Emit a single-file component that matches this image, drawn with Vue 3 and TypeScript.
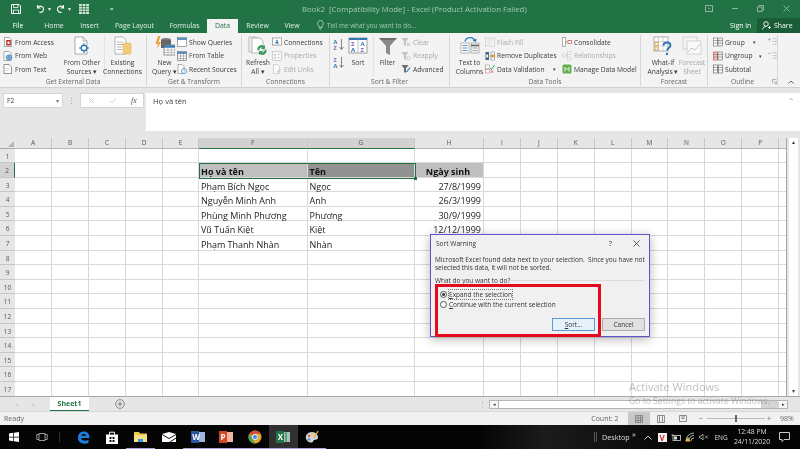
<script setup lang="ts">
interface ListRow {
  icon: string;
  label?: string;
  off?: boolean;
  caret?: number;
}

interface Col {
  kind: 'big' | 'list' | 'pair';
  w: number;
  icon?: string;
  lines?: string[];
  off?: boolean;
  sep?: boolean;
  rows?: ListRow[];
}

interface Group {
  title: string;
  w: number;
  pad: number;
  cols: Col[];
}

const icons: Record<string, string> = {
  access: '<path d="M1.500.5h5l2 2v7h-7z" fill="#fff" stroke="#777" stroke-width=".6"/><rect x="3.2" y="3" width="4.600" height="5.500" fill="#b7302c"/><rect x="4.500" y="4.500" width="2" height="2.500" fill="#fff"/>',
  web: '<path d="M1 .5h5l2 2v7H1z" fill="#fff" stroke="#777" stroke-width=".6"/><circle cx="6" cy="6.500" r="2.800" fill="#8cb9dd" stroke="#2e75b6" stroke-width=".6"/><path d="M3.500 6.500h5M6 4v5" stroke="#2e75b6" stroke-width=".4"/>',
  text: '<path d="M1 .5h5l2.500 2.500v6.500H1z" fill="#fff" stroke="#666" stroke-width=".7"/><path d="M2.500 4.500h4M2.500 6.500h4" stroke="#aaa" stroke-width=".5"/>',
  other: '<path d="M3 1h8l4 4v13H3z" fill="#fff" stroke="#8a8a8a" stroke-width=".7"/><path d="M11 1v4h4" fill="none" stroke="#8a8a8a" stroke-width=".7"/><circle cx="12" cy="12" r="2.800" fill="none" stroke="#2e75b6" stroke-width="1.400"/><path d="M12 7v2.500M12 14.500V17M7 12h2.500M14.500 12H17" stroke="#2e75b6" stroke-width="1"/>',
  existing: '<path d="M2 1h8l3 3v14H2z" fill="#fff" stroke="#999" stroke-width=".7"/><path d="M4 6h6M4 8.500h6M4 11h5M4 13.500h5" stroke="#999" stroke-width=".7"/><rect x="10" y="7" width="8" height="11" rx="1" fill="#f1cc7c" stroke="#d8a93f" stroke-width=".5"/>',
  query: '<path d="M3 0L.5 8H3l-1 5 4-7H3.500l2-6z" fill="#e9a23b"/><ellipse cx="11" cy="4" rx="5" ry="2" fill="#777"/><rect x="6" y="4" width="10" height="8" fill="#666"/><rect x="9" y="9" width="11" height="10" fill="#fff" stroke="#6c6c6c" stroke-width=".7"/><path d="M9 10.500h11" stroke="#2e75b6" stroke-width="2.400"/><path d="M9 14h11M9 16.500h11M13 12v7M16.500 12v7" stroke="#8a8a8a" stroke-width=".5"/>',
  show: '<rect x=".5" y=".5" width="9" height="9" fill="#fff" stroke="#6a6a6a" stroke-width=".6"/><path d="M.5 2h9" stroke="#2e75b6" stroke-width="1.600"/>',
  table: '<rect x=".5" y=".5" width="9" height="9" fill="#fff" stroke="#5c5c5c" stroke-width=".6"/><path d="M.5 2h9" stroke="#2e75b6" stroke-width="1.600"/><path d="M.5 5h9M.5 7.500h9M3.500 3v6.500M6.500 3v6.500" stroke="#777" stroke-width=".5"/>',
  recent: '<path d="M1 .5h4l2 2v7H1z" fill="#fff" stroke="#777" stroke-width=".6"/><circle cx="7" cy="7" r="2.500" fill="#fff" stroke="#2e75b6" stroke-width=".7"/><path d="M7 5.500V7h1.200" fill="none" stroke="#2e75b6" stroke-width=".5"/>',
  refresh: '<path d="M1 1h7l3 3v12H1z" fill="#f2f2f2" stroke="#999" stroke-width=".6"/><path d="M4 2h8l3 3v12H4z" fill="#fff" stroke="#888" stroke-width=".6"/><path d="M10 15a4 4 0 0 1 6-5l1-1v4h-4l1.500-1.500a2.300 2.300 0 0 0-3 2z" fill="#3a9a5b"/><path d="M18 13a4 4 0 0 1-6 5l-1 1v-4h4l-1.500 1.500a2.300 2.300 0 0 0 3-2z" fill="#3a9a5b"/>',
  conn: '<rect x=".5" y="1" width="9" height="7" fill="#fff" stroke="#777" stroke-width=".6"/><path d="M5 2.500l1.500 2h-3z" fill="#2e75b6"/><path d="M3.500 5h3v1.500h-3z" fill="#2e75b6"/>',
  props: '<rect x=".5" y=".5" width="9" height="9" fill="#f7f7f7" stroke="#bbb" stroke-width=".6"/><path d="M2 3h2v1.500H2zM2 6h2v1.500H2z" fill="#c8c8c8"/><path d="M5 3.500h3M5 6.500h3" stroke="#c0c0c0" stroke-width=".6"/>',
  links: '<path d="M1.500.5h4l2 2v7h-6z" fill="#f9f9f9" stroke="#bbb" stroke-width=".6"/><path d="M5 8l3-3 1 1-3 3z" fill="#c5c5c5"/>',
  az: '<text x=".5" y="5.500" font-size="5.500" font-weight="700" fill="#2e75b6">A</text><text x=".5" y="11.500" font-size="5.500" font-weight="700" fill="#7c6bb0">Z</text><path d="M8.500 1v10M6.500 9l2 2.500 2-2.500" fill="none" stroke="#666" stroke-width=".8"/>',
  za: '<text x=".5" y="5.500" font-size="5.500" font-weight="700" fill="#7c6bb0">Z</text><text x=".5" y="11.500" font-size="5.500" font-weight="700" fill="#2e75b6">A</text><path d="M8.500 1v10M6.500 9l2 2.500 2-2.500" fill="none" stroke="#666" stroke-width=".8"/>',
  sort: '<rect x="1" y="2" width="18" height="15" fill="#fff" stroke="#7a7a7a" stroke-width=".7"/><path d="M1 3h18" stroke="#2e75b6" stroke-width="2"/><path d="M10 2v15" stroke="#999" stroke-width=".6"/><text x="3" y="10" font-size="6" font-weight="700" fill="#7c6bb0">Z</text><text x="3" y="16" font-size="6" font-weight="700" fill="#2e75b6">A</text><text x="12.500" y="10" font-size="6" font-weight="700" fill="#2e75b6">A</text><text x="12.500" y="16" font-size="6" font-weight="700" fill="#7c6bb0">Z</text>',
  filter: '<path d="M1 2h18l-7 8v9l-4-2v-7z" fill="#8a8a8a"/><path d="M1 2h18l-2 2H3z" fill="#6e6e6e"/>',
  clear: '<path d="M.5 1h7L5 4.500V9L3 8V4.500z" fill="#c4c4c4"/><path d="M6 6l3 3M9 6l-3 3" stroke="#d49a94" stroke-width=".8"/>',
  reapply: '<path d="M.5 1h7L5 4.500V9L3 8V4.500z" fill="#c4c4c4"/><circle cx="7.500" cy="7" r="1.800" fill="none" stroke="#a9cdb5" stroke-width=".7"/>',
  advanced: '<path d="M.5 1h7L5 4.500V9L3 8V4.500z" fill="#6f6f6f"/><path d="M5.500 8L9 3.500" stroke="#2e75b6" stroke-width="1.200"/>',
  columns: '<rect x="1" y="7" width="8" height="10" fill="#fff" stroke="#8a8a8a" stroke-width=".6"/><path d="M2.500 9.500h5M2.500 12h5M2.500 14.500h5" stroke="#2e75b6" stroke-width=".8"/><rect x="11" y="7" width="8" height="10" fill="#f1f1f1" stroke="#8a8a8a" stroke-width=".6"/><path d="M11 9.500h8" stroke="#666" stroke-width="1.600"/><path d="M12.500 12h5M12.500 14.500h5" stroke="#777" stroke-width=".6"/><path d="M5 5.500C6 1 13 0 15 5" fill="none" stroke="#2e75b6" stroke-width="1.300"/><path d="M12.500 4l3 2.300L17 3z" fill="#2e75b6"/>',
  flash: '<rect x=".5" y="1" width="9" height="8" fill="#f7f7f7" stroke="#c0c0c0" stroke-width=".6"/><path d="M2 3h6M2 5h6M2 7h4" stroke="#cecece" stroke-width=".6"/>',
  dupes: '<rect x=".5" y="1" width="3.500" height="8" fill="#39648f"/><path d="M4.500 5h1" stroke="#555" stroke-width=".7"/><rect x="6" y="1" width="3.500" height="8" fill="#fff" stroke="#666" stroke-width=".5"/><rect x="6.300" y="3.500" width="3" height="3" fill="#e39a2b"/><rect x="1.200" y="3.500" width="2" height="3" fill="#fff"/>',
  valid: '<rect x=".5" y="1" width="4" height="3.500" fill="#fff" stroke="#888" stroke-width=".5"/><rect x=".5" y="5.500" width="4" height="3.500" fill="#fff" stroke="#c76161" stroke-width=".5"/><path d="M5 4l1.500 1.500L9.500 1" fill="none" stroke="#2f9a57" stroke-width=".9"/><path d="M5.500 6l3 3M8.500 6l-3 3" stroke="#c76161" stroke-width=".7"/>',
  consol: '<rect x=".5" y=".5" width="3" height="9" fill="#fff" stroke="#666" stroke-width=".5"/><path d="M3.500 5h2" stroke="#666" stroke-width=".6"/><rect x="6" y="3.500" width="3.500" height="3" fill="#fff" stroke="#c74a4a" stroke-width=".7"/>',
  rel: '<rect x=".5" y="3" width="3.500" height="3" fill="#f4f4f4" stroke="#c3c3c3" stroke-width=".5"/><rect x="5.500" y=".5" width="3.500" height="3" fill="#f4f4f4" stroke="#c3c3c3" stroke-width=".5"/><rect x="5.500" y="6" width="3.500" height="3" fill="#f4f4f4" stroke="#c3c3c3" stroke-width=".5"/><path d="M4 4.500h1.500V2M5.500 4.500V7" fill="none" stroke="#c3c3c3" stroke-width=".5"/>',
  model: '<rect x=".5" y=".5" width="9" height="9" rx="1.500" fill="#62ad4e"/><path d="M3 7.500V3.500l2 2 2-2v4" fill="none" stroke="#fff" stroke-width=".9"/>',
  whatif: '<rect x="1" y="1" width="14" height="14" fill="#fff" stroke="#8c8c8c" stroke-width=".7"/><path d="M1 5.500h14M1 10h14M5.500 1v14M10 1v14" stroke="#aaa" stroke-width=".5"/><rect x="2" y="6.500" width="3" height="3" fill="none" stroke="#e39a2b" stroke-width=".8"/><rect x="2" y="11" width="3" height="3" fill="none" stroke="#e39a2b" stroke-width=".8"/><path d="M10.500 9.500c0-4 7-4 7 0 0 2.500-3.500 2.500-3.500 5" fill="none" stroke="#2e75b6" stroke-width="1.800"/><circle cx="14" cy="18" r="1.200" fill="#2e75b6"/>',
  forecast: '<rect x="1" y="1" width="14" height="12" fill="#f4f4f4" stroke="#c4c4c4" stroke-width=".7"/><rect x="5" y="5" width="14" height="13" fill="#fafafa" stroke="#c4c4c4" stroke-width=".7"/><path d="M6 16l4-4 3 2 5-6" fill="none" stroke="#b9c9bf" stroke-width="1"/>',
  group: '<rect x=".5" y="1" width="4" height="8" fill="#fff" stroke="#555" stroke-width=".5"/><rect x="5" y="1" width="4.500" height="8" fill="#eee" stroke="#555" stroke-width=".5"/><path d="M.5 3.500h9M.5 6h9" stroke="#555" stroke-width=".5"/>',
  ungroup: '<rect x=".5" y="1" width="4" height="8" fill="#f3c3bd" stroke="#b9423c" stroke-width=".6"/><rect x="5" y="1" width="4.500" height="8" fill="#eee" stroke="#555" stroke-width=".5"/><path d="M.5 3.500h9M.5 6h9" stroke="#555" stroke-width=".5"/>',
  subtotal: '<rect x=".5" y="1" width="4" height="8" fill="#fff" stroke="#555" stroke-width=".6"/><rect x="5.500" y="1" width="4" height="8" fill="#fff" stroke="#555" stroke-width=".6"/><path d="M.5 3.500h9M.5 6h9" stroke="#555" stroke-width=".5"/>',
  plusrows: '<path d="M1 2.500h3M2.500 1v3" stroke="#a8a8a8" stroke-width=".7"/><path d="M5 1.500h4M5 4.500h4M5 7.500h4M9 1.500v6" fill="none" stroke="#c2c2c2" stroke-width=".7"/>',
  minusrows: '<path d="M1 2.500h3" stroke="#a8a8a8" stroke-width=".7"/><path d="M5 1.500h4M5 4.500h4M5 7.500h4M9 1.500v6" fill="none" stroke="#c2c2c2" stroke-width=".7"/>',
};

const groups: Group[] = [
  {
    title: 'Get External Data', w: 147, pad: 3,
    cols: [
      { kind: 'list', w: 57, rows: [{ icon: 'access', label: 'From Access' }, { icon: 'web', label: 'From Web' }, { icon: 'text', label: 'From Text' }] },
      { kind: 'big', w: 44, icon: 'other', lines: ['From Other', 'Sources ▾'] },
      { kind: 'big', w: 36, icon: 'existing', lines: ['Existing', 'Connections'], sep: true },
    ],
  },
  {
    title: 'Get & Transform', w: 95, pad: 5,
    cols: [
      { kind: 'big', w: 25, icon: 'query', lines: ['New', 'Query ▾'] },
      { kind: 'list', w: 64, rows: [{ icon: 'show', label: 'Show Queries' }, { icon: 'table', label: 'From Table' }, { icon: 'recent', label: 'Recent Sources' }] },
    ],
  },
  {
    title: 'Connections', w: 88, pad: 2,
    cols: [
      { kind: 'big', w: 28, icon: 'refresh', lines: ['Refresh', 'All ▾'] },
      { kind: 'list', w: 55, rows: [{ icon: 'conn', label: 'Connections' }, { icon: 'props', label: 'Properties', off: true }, { icon: 'links', label: 'Edit Links', off: true }] },
    ],
  },
  {
    title: 'Sort & Filter', w: 120, pad: 3,
    cols: [
      { kind: 'pair', w: 10 },
      { kind: 'big', w: 30, icon: 'sort', lines: ['Sort'] },
      { kind: 'big', w: 28, icon: 'filter', lines: ['Filter'], sep: true },
      { kind: 'list', w: 45, rows: [{ icon: 'clear', label: 'Clear', off: true }, { icon: 'reapply', label: 'Reapply', off: true }, { icon: 'advanced', label: 'Advanced' }] },
    ],
  },
  {
    title: 'Data Tools', w: 191, pad: 4,
    cols: [
      { kind: 'big', w: 31, icon: 'columns', lines: ['Text to', 'Columns'] },
      { kind: 'list', w: 77, rows: [{ icon: 'flash', label: 'Flash Fill', off: true }, { icon: 'dupes', label: 'Remove Duplicates' }, { icon: 'valid', label: 'Data Validation', caret: 6 }] },
      { kind: 'list', w: 76, rows: [{ icon: 'consol', label: 'Consolidate' }, { icon: 'rel', label: 'Relationships', off: true }, { icon: 'model', label: 'Manage Data Model' }] },
    ],
  },
  {
    title: 'Forecast', w: 67, pad: 6,
    cols: [
      { kind: 'big', w: 32, icon: 'whatif', lines: ['What-If', 'Analysis ▾'] },
      { kind: 'big', w: 26, icon: 'forecast', lines: ['Forecast', 'Sheet'], off: true },
    ],
  },
  {
    title: 'Outline', w: 70, pad: 5,
    cols: [
      { kind: 'list', w: 54, rows: [{ icon: 'group', label: 'Group', caret: 6 }, { icon: 'ungroup', label: 'Ungroup', caret: 4 }, { icon: 'subtotal', label: 'Subtotal' }] },
      { kind: 'list', w: 10, rows: [{ icon: 'plusrows', off: true }, { icon: 'minusrows', off: true }] },
    ],
  },
];

const tabs = [
  { label: 'Home', w: 36 },
  { label: 'Insert', w: 35 },
  { label: 'Page Layout', w: 55 },
  { label: 'Formulas', w: 45 },
  { label: 'Data', w: 31, active: true },
  { label: 'Review', w: 39 },
  { label: 'View', w: 30 },
];

const columns = [
  { name: 'A', w: 37 }, { name: 'B', w: 37 }, { name: 'C', w: 37 }, { name: 'D', w: 37 }, { name: 'E', w: 36 },
  { name: 'F', w: 108.5, sel: true }, { name: 'G', w: 107.5, sel: true }, { name: 'H', w: 69 },
  { name: 'I', w: 36.9 }, { name: 'J', w: 36.9 }, { name: 'K', w: 36.9 }, { name: 'L', w: 36.9 },
  { name: 'M', w: 36.9 }, { name: 'N', w: 36.9 }, { name: 'O', w: 36.9 }, { name: 'P', w: 36.9 }, { name: '', w: 8 },
];

const gridTemplate = '15px ' + columns.map((c) => c.w + 'px').join(' ');

const people: Record<number, string[]> = {
  2: ['Họ và tên', 'Tên', 'Ngày sinh'],
  3: ['Phạm Bích Ngọc', 'Ngọc', '27/8/1999'],
  4: ['Nguyễn Minh Anh', 'Anh', '26/3/1999'],
  5: ['Phùng Minh Phương', 'Phương', '30/9/1999'],
  6: ['Vũ Tuấn Kiệt', 'Kiệt', '12/12/1999'],
  7: ['Phạm Thanh Nhàn', 'Nhàn', ''],
};

const rows = Array.from({ length: 17 }, (_, i) => i + 1);

function cellText(row: number, col: string) {
  const idx = ['F', 'G', 'H'].indexOf(col);
  if (idx < 0 || !people[row]) return '';
  return people[row][idx];
}

const leftApps = ['edge', 'store', 'folder', 'mail', 'word', 'ppt', 'chrome', 'excel', 'paint'];
</script>

<template>
  <div class="app">
    <header class="titlebar">
      <div class="qat">
        <svg class="q-save" width="10" height="10" viewBox="0 0 10 10"><path d="M.5.5h7.500l1.500 1.500v7.500H.5z" fill="none" stroke="#fff" stroke-width="1"/><path d="M2.500 1v2.500h4.500V1M2.500 9V6h5v3" fill="none" stroke="#fff" stroke-width=".8"/></svg>
        <svg class="q-undo" width="9" height="9" viewBox="0 0 9 9"><path d="M1.500 1v3h3M1.800 3.800a3 3 0 1 1 1.500 4.200" fill="none" stroke="#fff" stroke-width="1.100"/></svg>
        <span class="q-caret">▾</span>
        <svg class="q-redo" width="9" height="9" viewBox="0 0 9 9"><path d="M7.500 1v3h-3M7.200 3.800a3 3 0 1 0-1.500 4.200" fill="none" stroke="#fff" stroke-width="1.100"/></svg>
        <span class="q-caret">▾</span>
        <svg class="q-grid" width="10" height="10" viewBox="0 0 10 10"><rect width="10" height="10" fill="#d5e5da"/><path d="M0 2.500h10M0 5h10M0 7.500h10M3.300 0v10M6.600 0v10" stroke="#217346" stroke-width=".7"/></svg>
        <span class="q-more">=</span>
      </div>
      <div class="doc-title">Book2 &nbsp;[Compatibility Mode] - Excel (Product Activation Failed)</div>
      <div class="win-btns">
        <svg width="8" height="7" viewBox="0 0 8 7"><rect x=".5" y=".5" width="7" height="6" fill="none" stroke="#8db39d"/><path d="M3 4l1-2 1 2z" fill="#8db39d"/></svg>
        <span class="w-min"></span>
        <svg width="7" height="7" viewBox="0 0 7 7"><path d="M.5 2h4.500v4.500H.5zM2 2V.5h4.500V5H5" fill="none" stroke="#8db39d"/></svg>
        <svg width="7" height="7" viewBox="0 0 7 7"><path d="M.5.5l6 6M6.500.5l-6 6" stroke="#8db39d"/></svg>
      </div>
    </header>

    <nav class="tabbar">
      <span class="file-tab">File</span>
      <span
        v-for="tab in tabs"
        :key="tab.label"
        class="tab"
        :class="{ active: tab.active }"
        :style="{ width: tab.w + 'px' }"
      >{{ tab.label }}</span>
      <svg class="bulb" width="7" height="10" viewBox="0 0 7 10"><path d="M3.500.5a3 3 0 0 1 1.500 5.500V7.500H2V6A3 3 0 0 1 3.500.5zM2.500 9h2" fill="none" stroke="#c9dcd0" stroke-width=".8"/></svg>
      <span class="tell">Tell me what you want to do...</span>
      <span class="sign">Sign in</span>
      <span class="share">
        <svg width="9" height="9" viewBox="0 0 9 9"><circle cx="4" cy="3" r="2.300" fill="none" stroke="#fff" stroke-width=".9"/><path d="M.5 8.500c.5-2.500 2-3 3.500-3M6 6.500h3M7.500 5v3" fill="none" stroke="#fff" stroke-width=".8"/></svg>
        Share
      </span>
    </nav>

    <section class="ribbon">
      <div
        v-for="g in groups"
        :key="g.title"
        class="group"
        :style="{ width: g.w + 'px', paddingLeft: g.pad + 'px' }"
      >
        <div class="group-body">
          <template v-for="(c, ci) in g.cols" :key="ci">
            <div v-if="c.kind === 'big'" class="big" :class="{ off: c.off, sep: c.sep }" :style="{ width: c.w + 'px' }">
              <svg class="big-icon" width="20" height="20" viewBox="0 0 20 20" v-html="icons[c.icon!]"></svg>
              <span v-for="line in c.lines" :key="line" class="big-line">{{ line }}</span>
            </div>
            <div v-else-if="c.kind === 'pair'" class="pair" :style="{ width: c.w + 'px' }">
              <svg width="12" height="12" viewBox="0 0 12 12" v-html="icons.az"></svg>
              <svg width="12" height="12" viewBox="0 0 12 12" v-html="icons.za"></svg>
            </div>
            <div v-else class="list" :style="{ width: c.w + 'px' }">
              <div v-for="r in c.rows" :key="r.icon" class="list-row" :class="{ off: r.off }">
                <svg width="10" height="10" viewBox="0 0 10 10" v-html="icons[r.icon]"></svg>
                <span v-if="r.label">{{ r.label }}</span>
                <span v-if="r.caret" class="caret" :style="{ marginLeft: r.caret + 'px' }">▾</span>
              </div>
            </div>
          </template>
        </div>
        <div class="group-title">{{ g.title }}</div>
      </div>
      <div class="ribbon-end">
        <svg class="launcher" width="5" height="5" viewBox="0 0 5 5"><path d="M.5 4.500v-4h4M2 2l2.500 2.500M4.500 2.500v2h-2" fill="none" stroke="#888" stroke-width=".6"/></svg>
        <svg class="collapse" width="6" height="4" viewBox="0 0 6 4"><path d="M.5 3.500L3 1l2.500 2.500" fill="none" stroke="#555" stroke-width=".9"/></svg>
      </div>
    </section>

    <section class="formula">
      <div class="namebox"><span>F2</span><i class="down">▾</i></div>
      <div class="dots">⋮</div>
      <div class="fxbox">
        <svg width="7" height="7" viewBox="0 0 7 7"><path d="M1 1l5 5M6 1l-5 5" stroke="#c6c6c6" stroke-width=".8"/></svg>
        <svg width="8" height="7" viewBox="0 0 8 7"><path d="M1 4l2 2 4-5" fill="none" stroke="#c6c6c6" stroke-width=".8"/></svg>
        <em>fx</em>
      </div>
      <div class="input">Họ và tên<span class="input-up">⌃</span></div>
    </section>

    <section class="sheet">
      <div class="grid" :style="{ gridTemplateColumns: gridTemplate }">
        <div class="corner"><i></i></div>
        <div v-for="c in columns" :key="c.name" class="colhead" :class="{ sel: c.sel }">{{ c.name }}</div>
        <template v-for="r in rows" :key="r">
          <div class="rowhead" :class="{ sel: r === 2 }">{{ r }}</div>
          <div
            v-for="c in columns"
            :key="c.name"
            class="cell"
            :class="[r === 2 && ['F', 'G', 'H'].includes(c.name) ? 'head-' + c.name : '', c.name === 'H' ? 'right' : '']"
          >{{ cellText(r, c.name) }}</div>
        </template>
        <div class="selection"><i></i></div>
      </div>
      <div class="vscroll">
        <div class="track">
          <span class="v-arrow">▴</span>
          <span class="v-arrow">▾</span>
        </div>
      </div>
    </section>

    <section class="sheetbar">
      <span class="nav">‹</span>
      <span class="nav">›</span>
      <span class="sheet-tab">Sheet1</span>
      <svg class="add" width="10" height="10" viewBox="0 0 10 10"><circle cx="5" cy="5" r="4.400" fill="none" stroke="#777" stroke-width=".8"/><path d="M5 2.500v5M2.500 5h5" stroke="#666" stroke-width=".8"/></svg>
      <span class="bar-dots">⋮</span>
      <div class="hscroll">
        <span class="h-arrow">◂</span>
        <span class="h-thumb"></span>
        <span class="h-arrow">▸</span>
      </div>
    </section>

    <footer class="status">
      <span class="ready">Ready</span>
      <span class="count">Count: 2</span>
      <span class="view on"><svg width="8" height="8" viewBox="0 0 8 8"><path d="M.5.500h7v7h-7zM.5 3h7M.5 5.500h7M3 .5v7M5.500 .5v7" fill="none" stroke="#666" stroke-width=".6"/></svg></span>
      <span class="view"><svg width="8" height="8" viewBox="0 0 8 8"><path d="M.5.500h7v7h-7zM2.500 .5v7M5.500 .5v7" fill="none" stroke="#666" stroke-width=".7"/></svg></span>
      <span class="view"><svg width="8" height="8" viewBox="0 0 8 8"><path d="M.5.500h7v6h-7zM3 .5v3h2v-3" fill="none" stroke="#666" stroke-width=".7"/></svg></span>
      <span class="zoom-minus">−</span>
      <span class="slider"><i></i></span>
      <span class="zoom-plus">+</span>
      <span class="pct">98%</span>
    </footer>

    <footer class="taskbar">
      <svg class="start" width="10" height="10" viewBox="0 0 10 10"><path d="M0 1.500L4.300.8v3.900H0zM5 .7L10 0v4.700H5zM0 5.400h4.300v3.800L0 8.500zM5 5.400h5V10L5 9.300z" fill="#fff"/></svg>
      <svg class="taskview" width="12" height="8" viewBox="0 0 12 8"><path d="M3 .5h6v7H3zM3 1.500H.8v5H3M9 1.500h2.200v5H9" fill="none" stroke="#bbb" stroke-width=".8"/></svg>
      <span class="tb-sep"></span>
      <span
        v-for="app in leftApps"
        :key="app"
        class="app-slot"
        :class="{ running: ['folder', 'word', 'ppt', 'chrome', 'excel', 'paint'].includes(app), current: app === 'excel' }"
      >
        <svg v-if="app === 'edge'" width="13" height="13" viewBox="0 0 13 13"><path d="M1 7C1 2.500 4 .5 7 .5c3.500 0 5.500 2.500 5.500 6.500H4.200c.2 3 4.500 3.500 7.300 1.800v3C8 13.500 1 13 1 7zm3.300-2.300h4.900C9 2.500 4.800 2.500 4.300 4.700z" fill="#1b7fe0"/></svg>
        <svg v-else-if="app === 'store'" width="12" height="13" viewBox="0 0 12 13"><path d="M0 3.500h12V13H0z" fill="#fff"/><path d="M3.500 3.500V1.200h5v2.300" fill="none" stroke="#fff"/><path d="M3.500 6h2v2h-2zM6.500 6h2v2h-2zM3.500 9h2v2h-2zM6.500 9h2v2h-2z" fill="#111"/></svg>
        <svg v-else-if="app === 'folder'" width="13" height="12" viewBox="0 0 13 12"><path d="M0 1h5l1 1.500h7V11H0z" fill="#f3c64f"/><path d="M0 4h13v7H0z" fill="#f9dd87"/><path d="M4 8h5v3H4z" fill="#2f9ce0"/></svg>
        <svg v-else-if="app === 'mail'" width="14" height="10" viewBox="0 0 14 10"><path d="M0 2L7 0l7 2v8H0z" fill="#fff"/><path d="M0 2.500L7 6.500l7-4" fill="none" stroke="#111" stroke-width="1"/><path d="M8 10l6-4" stroke="#111"/></svg>
        <svg v-else-if="app === 'word'" width="14" height="12" viewBox="0 0 14 12"><rect x="6" y="1" width="8" height="10" fill="#9db6de"/><rect width="8" height="12" fill="#2b579a"/><text x="1.200" y="9" font-size="8" font-weight="700" fill="#fff">W</text></svg>
        <svg v-else-if="app === 'ppt'" width="14" height="12" viewBox="0 0 14 12"><rect x="6" y="1" width="8" height="10" fill="#f1b5a4"/><rect width="8" height="12" fill="#d24726"/><text x="1.500" y="9" font-size="8" font-weight="700" fill="#fff">P</text></svg>
        <svg v-else-if="app === 'chrome'" width="14" height="14" viewBox="0 0 14 14"><circle cx="7" cy="7" r="6.500" fill="#e0a92b"/><path d="M7 .5a6.500 6.500 0 0 1 5.700 3.300H7a3.300 3.300 0 0 0-3 2L1.600 3.400A6.500 6.500 0 0 1 7 .5z" fill="#d64a3c"/><path d="M1.600 3.400L4.300 8.800 7 13.500A6.500 6.500 0 0 1 1.600 3.400z" fill="#47a25a"/><circle cx="7" cy="7" r="2.600" fill="#4a8bf0" stroke="#fff" stroke-width=".8"/></svg>
        <svg v-else-if="app === 'excel'" width="14" height="12" viewBox="0 0 14 12"><rect x="6" y="1" width="8" height="10" fill="#a4c7b1"/><path d="M10 1v10" stroke="#217346"/><rect width="8" height="12" fill="#217346"/><text x="1.800" y="9" font-size="8" font-weight="700" fill="#fff">X</text></svg>
        <svg v-else width="14" height="14" viewBox="0 0 14 14"><path d="M7 2C3 2 .5 5 .8 8c.4 3 3.500 5 6.200 4.500 1.500-.3 1-2 2-2.500 1.500-.5 3.500 0 4-2 .5-3-2.500-6-6-6z" fill="#cfd6dc"/><circle cx="4" cy="6" r="1.200" fill="#e35b4a"/><circle cx="7" cy="4.500" r="1.200" fill="#f2c23c"/><circle cx="4" cy="9.500" r="1.200" fill="#3e9bd6"/><path d="M9 8l4-7" stroke="#e8a23b" stroke-width="1.400"/></svg>
      </span>

      <div class="tray">
        <span class="desk-sep"></span>
        <span class="desktop">Desktop</span>
        <span class="chev">»</span>
        <span class="slot"><svg width="8" height="5" viewBox="0 0 8 5"><path d="M.5 4.500L4 1l3.500 3.500" fill="none" stroke="#ddd" stroke-width=".9"/></svg></span>
        <span class="slot"><span class="t-v">V</span></span>
        <span class="slot"><svg width="10" height="7" viewBox="0 0 10 7"><rect x="2" y="1.500" width="7.500" height="5" fill="none" stroke="#ddd" stroke-width=".8"/><rect x="3" y="2.500" width="3" height="3" fill="#ddd"/><path d="M.5 1h2" stroke="#ddd"/></svg></span>
        <span class="slot"><svg width="10" height="10" viewBox="0 0 10 10"><path d="M1 9a8 8 0 0 1 8-8M3.500 9A5.500 5.500 0 0 1 9 3.500M6 9a3 3 0 0 1 3-3" fill="none" stroke="#ddd" stroke-width=".8"/><path d="M.5 9.500L3 5l2.500 4.500z" fill="#f3c037"/></svg></span>
        <span class="slot"><svg width="10" height="8" viewBox="0 0 10 8"><path d="M.5 3v2h1.500l2 2V1L2 3z" fill="none" stroke="#ccc" stroke-width=".7"/><path d="M6 2.500l3 3M9 2.500l-3 3" stroke="#ccc" stroke-width=".7"/></svg></span>
        <span class="eng">ENG</span>
        <div class="clock"><span>12:48 PM</span><span>24/11/2020</span></div>
        <svg class="note" width="11" height="10" viewBox="0 0 11 10"><path d="M.5.500h10v7H5L3 9.500v-2H.5z" fill="none" stroke="#ddd" stroke-width=".9"/></svg>
      </div>
    </footer>

    <!-- nam tren bang tinh: hop thoai va khung do -->
    <div class="dialog">
      <div class="dlg-title">
        <span>Sort Warning</span>
        <span class="dlg-help">?</span>
        <svg width="7" height="7" viewBox="0 0 7 7"><path d="M.5.500l6 6M6.500.5l-6 6" stroke="#333" stroke-width=".8"/></svg>
      </div>
      <p class="dlg-text">Microsoft Excel found data next to your selection.&nbsp; Since you have not<br>selected this data, it will not be sorted.</p>
      <div class="dlg-legend"><span>What do you want to do?</span><i></i></div>
      <label class="radio first"><i class="dot on"></i><span class="focus"><u>E</u>xpand the selection</span></label>
      <label class="radio"><i class="dot"></i><span><u>C</u>ontinue with the current selection</span></label>
      <div class="dlg-btns">
        <button class="primary"><u>S</u>ort...</button>
        <button>Cancel</button>
      </div>
    </div>
    <div class="redbox"></div>
    <div class="activate">
      <div class="a1">Activate Windows</div>
      <div class="a2">Go to Settings to activate Windows.</div>
    </div>
  </div>
</template>

<style scoped>
.app {
  position: relative;
  width: 800px;
  height: 449px;
  overflow: hidden;
  display: flex;
  flex-direction: column;
  font-family: "Open Sans", "Noto Sans", sans-serif;
  font-size: 6.7px;
  color: #3a3a3a;
  background: #e6e6e6;
  filter: blur(0.3px);
}

svg {
  flex: none;
  display: block;
}

/* title */
.titlebar {
  height: 17px;
  background: #217346;
  display: flex;
  align-items: center;
  flex: none;
}
.qat {
  width: 302px;
  display: flex;
  align-items: center;
  color: #fff;
  padding-left: 11px;
  box-sizing: border-box;
}
.q-undo { margin-left: 15px; }
.q-redo { margin-left: 5px; }
.q-caret { font-size: 6px; margin-left: 3px; color: #dfeae3; }
.q-grid { margin-left: 8px; }
.q-more { margin-left: 21px; font-size: 6px; }
.doc-title {
  flex: 1;
  color: #a5c7b3;
  font-size: 7.8px;
  white-space: nowrap;
}
.win-btns {
  display: flex;
  align-items: center;
  gap: 19px;
  padding-right: 10px;
}
.w-min {
  width: 6px;
  height: 1px;
  background: #8db39d;
}

/* tabs */
.tabbar {
  height: 16px;
  background: #217346;
  display: flex;
  align-items: flex-end;
  color: #e4eee8;
  flex: none;
  font-size: 6.9px;
}
.file-tab {
  width: 36px;
  height: 15px;
  line-height: 15px;
  text-align: center;
  color: #fff;
}
.tab {
  height: 14px;
  line-height: 14px;
  text-align: center;
  white-space: nowrap;
}
.tab.active {
  background: #f3f3f3;
  color: #217346;
}
.bulb {
  margin: 0 3px 3px 10px;
}
.tell {
  width: 300px;
  height: 14px;
  line-height: 14px;
  color: #a5c7b3;
  white-space: nowrap;
  font-size: 6.4px;
}
.sign {
  margin-left: auto;
  width: 27px;
  height: 14px;
  line-height: 14px;
  white-space: nowrap;
  color: #fff;
}
.share {
  width: 43px;
  height: 15px;
  background: #1a5c38;
  color: #fff;
  display: flex;
  align-items: center;
  gap: 3px;
  padding-left: 5px;
  box-sizing: border-box;
}

/* ribbon */
.ribbon {
  height: 55px;
  background: #f3f3f3;
  display: flex;
  border-bottom: 1px solid #d0d0d0;
  box-sizing: border-box;
  flex: none;
}
.group {
  flex: none;
  box-sizing: border-box;
  display: flex;
  flex-direction: column;
  border-right: 1px solid #d6d6d6;
  margin: 2px 0 1px;
  position: relative;
}
.group-body {
  flex: 1;
  display: flex;
}
.group-title {
  position: absolute;
  left: 0;
  right: 0;
  bottom: 0;
  text-align: center;
  color: #666;
  line-height: 9px;
}
.big {
  flex: none;
  display: flex;
  flex-direction: column;
  align-items: center;
  white-space: nowrap;
  line-height: 9.2px;
  height: 42px;
  box-sizing: border-box;
}
.big.sep {
  border-left: 1px solid #e2e2e2;
}
.big-icon {
  margin: 1px 0 2px;
}
.big.off { color: #a6a6a6; }
.pair {
  flex: none;
  display: flex;
  flex-direction: column;
  align-items: flex-start;
  gap: 6px;
  padding-top: 3px;
  box-sizing: border-box;
}
.list {
  flex: none;
  display: flex;
  flex-direction: column;
  padding-top: 0.5px;
}
.list-row {
  height: 13.5px;
  display: flex;
  align-items: center;
  gap: 2px;
  white-space: nowrap;
}
.list-row.off { color: #aaa; }
.caret {
  font-size: 5px;
}
.ribbon-end {
  flex: 1;
  position: relative;
}
.launcher {
  position: absolute;
  left: -6px;
  bottom: 3px;
}
.collapse {
  position: absolute;
  right: 6px;
  bottom: 3px;
}

/* formula */
.formula {
  height: 50px;
  padding: 5px 0 0 3px;
  box-sizing: border-box;
  background: #e6e6e6;
  display: flex;
  align-items: flex-start;
  flex: none;
}
.namebox {
  width: 60px;
  height: 15px;
  background: #fff;
  border: 1px solid #d4d4d4;
  box-sizing: border-box;
  display: flex;
  align-items: center;
  justify-content: space-between;
  padding: 0 3px;
}
.down {
  font-style: normal;
  font-size: 6px;
  color: #777;
}
.dots {
  width: 17px;
  height: 15px;
  line-height: 15px;
  text-align: center;
  color: #999;
}
.fxbox {
  width: 64px;
  height: 15px;
  background: #fff;
  border: 1px solid #d4d4d4;
  box-sizing: border-box;
  display: flex;
  align-items: center;
  gap: 14px;
  padding-left: 7px;
}
.fxbox em {
  font-family: "Liberation Serif", serif;
  font-size: 8px;
  color: #555;
}
.input {
  margin-left: 2px;
  flex: 1;
  height: 38px;
  background: #fff;
  padding: 3px 0 0 7px;
  box-sizing: border-box;
  font-size: 7.6px;
  position: relative;
}
.input-up {
  position: absolute;
  right: 5px;
  top: 3px;
  color: #aaa;
}

/* sheet */
.sheet {
  height: 258px;
  display: flex;
  background: #fff;
  flex: none;
  overflow: hidden;
}
.grid {
  width: 787px;
  flex: none;
  position: relative;
  display: grid;
  grid-template-rows: 10.5px;
  grid-auto-rows: 14.6px;
  background: #fff;
  overflow: hidden;
  box-sizing: border-box;
  border-right: 1px solid #a8a8a8;
}
.corner {
  background: #e6e6e6;
  position: relative;
  border-bottom: 1px solid #aaa;
}
.corner i {
  position: absolute;
  right: 1px;
  bottom: 1px;
  border-left: 6px solid transparent;
  border-bottom: 6px solid #b5b5b5;
}
.colhead {
  background: #e6e6e6;
  text-align: center;
  line-height: 10px;
  font-size: 6.5px;
  color: #555;
  border-right: 1px solid #c6c6c6;
  border-bottom: 1px solid #b5b5b5;
  box-sizing: border-box;
}
.colhead.sel {
  background: #d2d2d2;
  border-bottom: 1px solid #217346;
}
.rowhead {
  background: #e6e6e6;
  text-align: center;
  font-size: 6.5px;
  line-height: 16.5px;
  color: #555;
  border-bottom: 1px solid #c6c6c6;
  box-sizing: border-box;
}
.rowhead.sel {
  background: #d2d2d2;
  border-right: 1px solid #217346;
}
.cell {
  border-right: 1px solid #d9d9d9;
  border-bottom: 1px solid #d9d9d9;
  box-sizing: border-box;
  line-height: 17px;
  font-size: 9px;
  color: #222;
  padding-left: 2px;
  white-space: nowrap;
}
.cell.right {
  text-align: right;
  padding: 0 2px 0 0;
}
.head-F, .head-H {
  background: #bfbfbf;
  font-weight: 700;
  color: #111;
}
.head-G {
  background: #919191;
  font-weight: 700;
  color: #111;
}
.cell.right.head-H {
  text-align: center;
}
.selection {
  position: absolute;
  left: 198.5px;
  top: 25px;
  width: 217px;
  height: 15.6px;
  border: 1.5px solid #217346;
  box-sizing: border-box;
}
.selection i {
  position: absolute;
  right: -2.5px;
  bottom: -2.5px;
  width: 3px;
  height: 3px;
  background: #217346;
}
.vscroll {
  flex: 1;
  background: #e6e6e6;
  padding: 0 2px;
}
.track {
  height: 100%;
  background: #fff;
  display: flex;
  flex-direction: column;
  justify-content: space-between;
  align-items: center;
  font-size: 6px;
  line-height: 9px;
  color: #444;
}

/* sheet tabs */
.sheetbar {
  height: 15px;
  background: #e6e6e6;
  border-top: 1px solid #a8a8a8;
  box-sizing: border-box;
  display: flex;
  align-items: center;
  flex: none;
}
.nav {
  width: 16px;
  text-align: center;
  color: #aaa;
  font-size: 7px;
}
.nav:first-child { margin-left: 9px; }
.sheet-tab {
  margin-left: 9px;
  width: 39px;
  height: 14px;
  line-height: 13px;
  text-align: center;
  background: #fff;
  color: #217346;
  font-weight: 700;
  font-size: 7px;
  border-bottom: 1px solid #217346;
  box-sizing: border-box;
}
.add {
  margin-left: 26px;
}
.bar-dots {
  margin-left: 354px;
  color: #aaa;
  width: 9px;
}
.hscroll {
  width: 299px;
  height: 9px;
  background: #d4d4d4;
  border: 1px solid #b5b5b5;
  box-sizing: border-box;
  display: flex;
  align-items: center;
  justify-content: space-between;
  margin-left: 1px;
}
.h-arrow {
  width: 8px;
  height: 7px;
  background: #f6f6f6;
  font-size: 5px;
  line-height: 7px;
  text-align: center;
  color: #333;
  flex: none;
}
.h-thumb {
  width: 263px;
  height: 7px;
  background: #fff;
  border-left: 1px solid #aaa;
  box-sizing: border-box;
  margin-right: auto;
}

/* status */
.status {
  height: 14px;
  background: #f1f1f1;
  display: flex;
  align-items: center;
  flex: none;
  color: #666;
  font-size: 7px;
  border-top: 1px solid #d8d8d8;
  box-sizing: border-box;
}
.ready {
  margin-left: 4px;
  width: 588px;
}
.count {
  width: 37px;
}
.view {
  width: 22px;
  height: 13px;
  display: flex;
  align-items: center;
  justify-content: center;
}
.view.on {
  background: #c8c8c8;
}
.zoom-minus {
  margin-left: 5px;
  width: 8px;
}
.slider {
  width: 58px;
  height: 1px;
  background: #bbb;
  position: relative;
}
.slider i {
  position: absolute;
  left: 28px;
  top: -3px;
  width: 2px;
  height: 7px;
  background: #666;
}
.zoom-plus {
  margin-left: 2px;
  width: 13px;
}
.pct {
  width: 20px;
}

/* taskbar */
.taskbar {
  height: 24px;
  flex: none;
  background: linear-gradient(90deg, #050505 0 60%, #1c1b1b 68%, #131313 75%, #050505 85%);
  display: flex;
  align-items: center;
  color: #ddd;
}
.start { margin-left: 9px; }
.taskview { margin-left: 17px; }
.tb-sep {
  width: 1px;
  height: 10px;
  background: #333;
  margin: 0 9px 0 11px;
}
.app-slot {
  width: 28.6px;
  height: 24px;
  display: flex;
  align-items: center;
  justify-content: center;
  box-sizing: border-box;
}
.app-slot.running {
  border-bottom: 1px solid #a9a7e6;
}
.app-slot.current {
  background: #303030;
}
.tray {
  margin-left: auto;
  width: 206px;
  display: flex;
  align-items: center;
  font-size: 7px;
}
.desk-sep {
  width: 3px;
  height: 10px;
  margin-right: 5px;
  border-left: 1px solid #555;
  border-right: 1px solid #555;
  box-sizing: border-box;
}
.desktop {
  width: 30px;
  font-size: 7.2px;
}
.chev {
  width: 9px;
  margin-top: -8px;
  font-size: 8px;
}
.slot {
  width: 14px;
  display: flex;
  justify-content: center;
}
.t-v {
  width: 9px;
  height: 9px;
  background: #f2f2f2;
  color: #d62d2d;
  font-weight: 700;
  font-size: 8px;
  line-height: 9px;
  text-align: center;
}
.eng {
  width: 20px;
  text-align: center;
  font-size: 6.5px;
}
.clock {
  width: 42px;
  display: flex;
  flex-direction: column;
  align-items: center;
  font-size: 6.8px;
  line-height: 10px;
}
.note { margin-left: 6px; }

/* dialog */
.dialog {
  position: absolute;
  left: 430px;
  top: 234px;
  width: 220px;
  height: 103px;
  background: #f0f0f0;
  border: 1px solid #5a55c8;
  box-sizing: border-box;
  box-shadow: 0 2px 10px rgba(0, 0, 0, .3);
  padding: 0 4px;
  color: #333;
  font-size: 6.5px;
}
.dlg-title {
  height: 16px;
  display: flex;
  align-items: center;
  font-size: 6.6px;
  padding-left: 1px;
}
.dlg-help {
  margin-left: auto;
  margin-right: 21px;
  font-size: 7.4px;
}
.dlg-title svg { margin-right: 5px; }
.dlg-text {
  margin: 4.5px 0 0;
  line-height: 8.4px;
  white-space: nowrap;
}
.dlg-legend {
  margin-top: 4px;
  display: flex;
  align-items: center;
  line-height: 9px;
}
.dlg-legend i {
  flex: 1;
  height: 1px;
  background: #dcdcdc;
}
.radio {
  display: flex;
  align-items: center;
  gap: 2px;
  height: 10.4px;
  margin-left: 5px;
}
.radio.first {
  margin-top: 4px;
}
.radio .dot {
  width: 7px;
  height: 7px;
  border: 1px solid #555;
  border-radius: 50%;
  background: #fff;
  box-sizing: border-box;
  position: relative;
}
.dot.on::after {
  content: "";
  position: absolute;
  inset: 1px;
  border-radius: 50%;
  background: #333;
}
.focus {
  outline: 1px dotted #777;
}
.dlg-btns {
  display: flex;
  justify-content: flex-end;
  gap: 7px;
  margin-top: 8px;
}
.dlg-btns button {
  width: 43px;
  height: 13px;
  padding: 0;
  background: #e1e1e1;
  border: 1px solid #adadad;
  font: inherit;
  color: #333;
}
.dlg-btns .primary {
  background: #e5f1fb;
  border-color: #5a9bd6;
}
.redbox {
  position: absolute;
  left: 435px;
  top: 284px;
  width: 166px;
  height: 53px;
  border: 3px solid #e60a1e;
  box-sizing: border-box;
}
.activate {
  position: absolute;
  left: 629px;
  top: 379px;
  color: rgba(110, 110, 110, .45);
  white-space: nowrap;
}
.a1 {
  font-size: 11px;
  line-height: 15px;
}
.a2 {
  font-size: 8.6px;
  line-height: 12px;
  margin-top: 1px;
}
</style>
